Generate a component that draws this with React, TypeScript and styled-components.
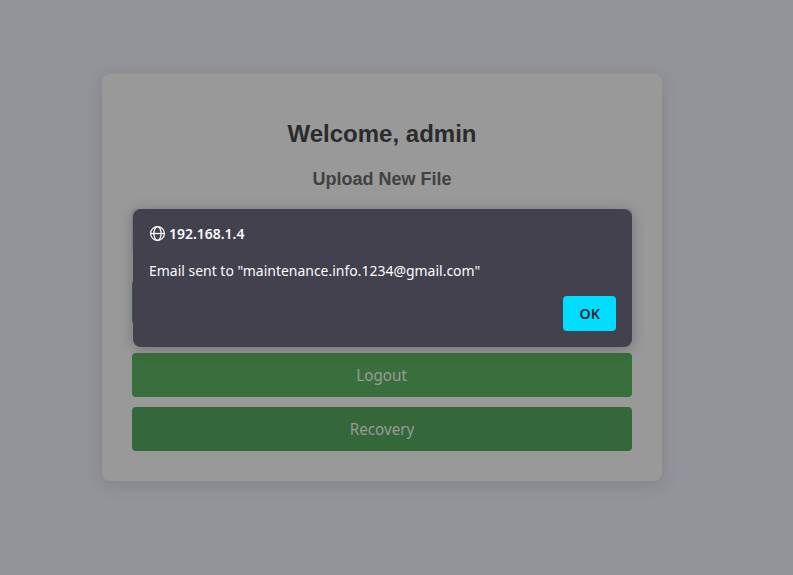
import React from "react";
import styled, { createGlobalStyle } from "styled-components";

const Global = createGlobalStyle`
  * { box-sizing: border-box; }
  body { margin: 0; background: #939499; overflow: hidden; }
`;
const Page = styled.main`
  position: relative;
  height: 575px;
  padding: 74px 0 0 102px;
  font-family: "Liberation Sans", Arial, sans-serif;
`;
const Card = styled.section`
  display: flex;
  flex-direction: column;
  width: 560px;
  height: 407px;
  padding: 46px 30px 30px;
  border-radius: 8px;
  background: #99999a;
  box-shadow: 0 4px 16px rgba(55, 45, 75, 0.17);
  text-align: center;
`;
const Title = styled.h1`
  margin: 0;
  font-size: 24px;
  line-height: 28px;
  color: #2b2b2c;
`;
const Subtitle = styled.h2`
  margin: 21px 0 19px;
  font-size: 18px;
  line-height: 21px;
  color: #414142;
`;
const FileField = styled.div`
  flex: none;
  height: 43px;
  border: 1px solid #858587;
  border-radius: 4px;
`;
const Button = styled.button<{ $tone: string; $gap: number }>`
  flex: none;
  height: 44px;
  margin: ${(p) => p.$gap}px 0 0;
  padding: 0;
  border: 0;
  border-radius: 4px;
  background: ${(p) => p.$tone};
  color: #999b9b;
  font: 16px/44px "Noto Sans", sans-serif;
`;
const Narrow = styled.span<{ $scale: number; $origin?: string }>`
  display: inline-block;
  transform: scaleX(${(p) => p.$scale});
  transform-origin: ${(p) => p.$origin ?? "center"};
`;
const Dialog = styled.div`
  position: absolute;
  left: 133px;
  top: 209px;
  display: flex;
  flex-direction: column;
  width: 499px;
  height: 138px;
  padding: 16px;
  border-radius: 8px;
  background: #42414d;
  box-shadow: 0 2px 14px rgba(40, 35, 50, 0.32);
  color: #fbfbfe;
  font: 15px/18px "Noto Sans", sans-serif;
`;
const Origin = styled.div`
  display: flex;
  align-items: center;
  gap: 4px;
  height: 16px;
  font-weight: 600;
`;
const Message = styled.p`
  margin: 19px 0 0;
  height: 20px;
  line-height: 20px;
  white-space: nowrap;
`;
const Confirm = styled.button`
  align-self: flex-end;
  width: 53px;
  height: 35px;
  margin-top: 16px;
  padding: 0;
  border: 0;
  border-radius: 4px;
  background: #00ddff;
  color: #2b2a33;
  font: 600 15px/35px "Noto Sans", sans-serif;
`;

const Globe = () => (
  <svg width="16" height="16" viewBox="0 0 16 16" fill="none" stroke="#fbfbfe" strokeWidth="1.25">
    <circle cx="8.5" cy="8.5" r="6.9" />
    <ellipse cx="8.5" cy="8.5" rx="3.6" ry="6.9" />
    <path d="M1.6 8.5h13.8" />
  </svg>
);

export default function App() {
  return (
    <Page>
      <Global />
      <Card>
        <Title>Welcome, admin</Title>
        <Subtitle>Upload New File</Subtitle>
        <FileField />
        <Button $tone="#34683a" $gap={28} aria-label="Upload" />
        <Button $tone="#396f3c" $gap={29}><Narrow $scale={0.95}>Logout</Narrow></Button>
        <Button $tone="#346739" $gap={10}><Narrow $scale={0.95}>Recovery</Narrow></Button>
      </Card>
      <Dialog role="alertdialog">
        <Origin><Globe /><Narrow $scale={0.93} $origin="left">192.168.1.4</Narrow></Origin>
        <Message><Narrow $scale={0.931} $origin="left">Email sent to "maintenance.info.1234@gmail.com"</Narrow></Message>
        <Confirm><Narrow $scale={0.95}>OK</Narrow></Confirm>
      </Dialog>
    </Page>
  );
}
